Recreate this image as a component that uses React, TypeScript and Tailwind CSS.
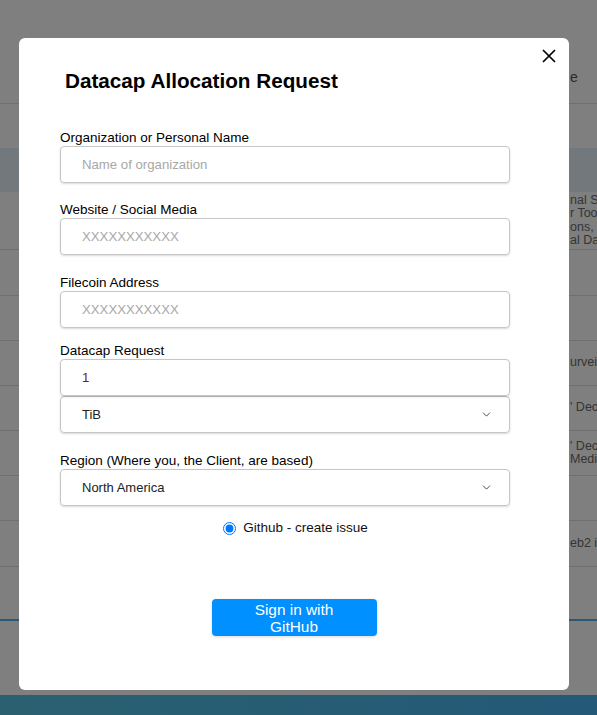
import { ChevronDown } from "lucide-react";

const rows = [
	{ h: "h-[58px]", lines: ["nal S", "r Too", "ons, U", "al Dat"] },
	{ h: "h-[46px]", lines: [] },
	{ h: "h-[45px]", lines: [] },
	{ h: "h-[45px]", lines: ["urvei"] },
	{ h: "h-[45px]", lines: ["' Dece"] },
	{ h: "h-[45px]", lines: ["' Dece", "Media"] },
	{ h: "h-[45px]", lines: [] },
	{ h: "h-[46px]", lines: ["eb2 in"] },
];

const Field = ({ label, placeholder, gap }: { label: string; placeholder: string; gap: string }) => (
	<div className={gap}>
		<label className="block pt-[3px] text-[13.5px] leading-[17px] text-black">{label}</label>
		<input
			type="text"
			placeholder={placeholder}
			className="w-full h-[37px] rounded border border-[#c6c6c6] pl-[21px] text-[13.2px] text-[#222] shadow-[0_1px_2px_rgba(0,0,0,0.15)] placeholder:text-[#a8a8a8] outline-none"
		/>
	</div>
);

const SelectBox = ({ value }: { value: string }) => (
	<div className="w-full h-[37px] rounded border border-[#c6c6c6] pl-[21px] pr-[16px] flex items-center justify-between text-[13px] text-[#222] shadow-[0_1px_2px_rgba(0,0,0,0.15)]">
		<span>{value}</span>
		<ChevronDown size={13} strokeWidth={1.75} className="text-[#444]" />
	</div>
);

export default function App() {
	return (
		<div className="relative w-[597px] h-[715px] overflow-hidden bg-white font-['Liberation_Sans',Arial,sans-serif]">
			{/* page behind the dialog */}
			<div className="flex flex-col h-full">
				<div className="h-[104px] border-b border-[#dedede] flex items-end pb-[15px]">
					<span className="ml-[570px] text-[14px] text-[#555]">e</span>
				</div>
				<div className="h-[44px]" />
				<div className="h-[44px] bg-[#e7f0fa]" />
				{rows.map((r, i) => (
					<div key={i} className={`${r.h} border-b border-[#dedede] flex items-center`}>
						<div className="ml-[570px] text-[12.5px] leading-[13.5px] text-[#6a6a6a] whitespace-nowrap">
							{r.lines.map((l, j) => (
								<div key={j}>{l}</div>
							))}
						</div>
					</div>
				))}
				<div className="h-[55px] border-b-2 border-[#58b0ee] -mt-px" />
				<div className="flex-1" />
				<div className="h-[20px] bg-gradient-to-r from-[#55c1e1] to-[#48b3ef]" />
			</div>

			{/* dim overlay */}
			<div className="absolute inset-0 bg-black/50" />

			{/* dialog */}
			<div className="absolute left-[19px] top-[38px] w-[550px] h-[652px] bg-white rounded-md pt-[29px]">
				<button className="absolute right-[12px] top-[10px] w-[16px] h-[16px] flex items-center justify-center">
					<svg width="16" height="16" viewBox="0 0 16 16" fill="none" stroke="#000" strokeWidth="1.7">
						<path d="M2 2 L14 14 M14 2 L2 14" />
					</svg>
				</button>

				<h2 className="ml-[46px] text-[20.7px] leading-7 font-bold text-black">Datacap Allocation Request</h2>

				<div className="ml-[41px] w-[450px] mt-[31px]">
					<Field label="Organization or Personal Name" placeholder="Name of organization" gap="mb-[15px]" />
					<Field label="Website / Social Media" placeholder="XXXXXXXXXXX" gap="mb-[16px]" />
					<Field label="Filecoin Address" placeholder="XXXXXXXXXXX" gap="mb-[11px]" />

					<div className="mb-[16px]">
						<label className="block pt-[3px] text-[13.5px] leading-[17px] text-black">Datacap Request</label>
						<input
							type="text"
							defaultValue="1"
							className="w-full h-[37px] rounded border border-[#c6c6c6] pl-[21px] text-[13.2px] text-[#7a1a12] shadow-[0_1px_2px_rgba(0,0,0,0.15)] outline-none"
						/>
						<SelectBox value="TiB" />
					</div>

					<div>
						<label className="block pt-[3px] text-[13.5px] leading-[17px] text-black">Region (Where you, the Client, are based)</label>
						<SelectBox value="North America" />
					</div>
				</div>

				<div className="mt-[12px] flex items-center justify-center gap-[7px] h-5 text-[13.5px] text-[#111]">
					<input type="radio" defaultChecked className="w-[13px] h-[13px] ml-[3px]" />
					<span>Github - create issue</span>
				</div>

				<button className="block mx-auto mt-[61px] w-[165px] h-[37px] rounded bg-[#0090ff] text-white text-[15.4px] leading-[17px] shadow-[0_1px_3px_rgba(0,0,0,0.15)]">
					Sign in with
					<br />
					GitHub
				</button>
			</div>
		</div>
	);
}
